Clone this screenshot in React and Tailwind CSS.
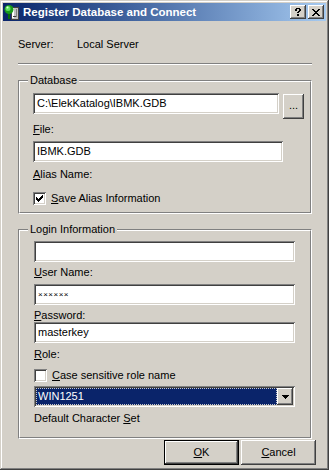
import React from 'react';

const raised = 'shadow-[inset_-1px_-1px_#404040,inset_1px_1px_#ffffff,inset_-2px_-2px_#808080,inset_2px_2px_#d4d0c8]';
const sunken = 'shadow-[inset_1px_1px_#808080,inset_-1px_-1px_#ffffff,inset_2px_2px_#404040,inset_-2px_-2px_#d4d0c8]';

// label with one underlined access key
const Label = ({ pre = '', k, post = '', className = '' }) => (
    <div className={`h-[13px] leading-[13px] whitespace-pre ${className}`}>
        {pre}<span className="underline underline-offset-[1px]">{k}</span>{post}
    </div>
);

const Edit = ({ value, className = '', small }) => (
    <div className={`h-[21px] bg-white ${sunken} flex items-center pl-[4px] ${className}`}>
        <span className={small ? 'text-[8px] leading-none tracking-[0.5px]' : 'leading-[13px]'}>{value}</span>
    </div>
);

const Check = ({ checked }) => (
    <div className={`w-[13px] h-[13px] bg-white ${sunken} flex items-center justify-center shrink-0`}>
        {checked && (
            <svg width="7" height="7" viewBox="0 0 7 7" shapeRendering="crispEdges">
                <path d="M0 2h1v3H0zM1 3h1v3H1zM2 4h1v3H2zM3 3h1v3H3zM4 2h1v3H4zM5 1h1v3H5zM6 0h1v3H6z" fill="#000" />
            </svg>
        )}
    </div>
);

const Group = ({ title, className = '', children }) => (
    <div className={`relative border border-t-[#808080] border-l-[#808080] border-b-white border-r-white ${className}`}>
        <div className="border border-t-white border-l-white border-b-[#808080] border-r-[#808080] h-full">
            {children}
        </div>
        <div className="absolute left-[9px] -top-[7px] bg-[#d4d0c8] px-[2px] h-[13px] leading-[13px]">{title}</div>
    </div>
);

const TitleIcon = () => (
    <svg width="16" height="16" viewBox="0 0 16 16" shapeRendering="crispEdges">
        <rect x="7" y="3" width="7" height="12" fill="#c0c0c0" stroke="#404040" strokeWidth="1" />
        <rect x="8" y="4" width="2" height="10" fill="#ffffff" />
        <rect x="12" y="5" width="1" height="8" fill="#808080" />
        <rect x="9" y="12" width="3" height="1" fill="#404040" />
        <circle cx="5" cy="5.5" r="4.5" fill="#1a9a1a" shapeRendering="auto" />
        <circle cx="4" cy="4.5" r="2.5" fill="#5fe05f" shapeRendering="auto" />
        <circle cx="3.5" cy="3.5" r="1" fill="#d8ffd8" shapeRendering="auto" />
        <rect x="4" y="10" width="2" height="5" fill="#0a6a0a" />
    </svg>
);

export default function App() {
    return (
        <div className="w-[329px] h-[470px] bg-[#d4d0c8] p-[3px] flex flex-col text-[11px] text-black shadow-[inset_-1px_-1px_#404040,inset_1px_1px_#d4d0c8,inset_-2px_-2px_#808080,inset_2px_2px_#ffffff] font-['Liberation_Sans',Arial,sans-serif] select-none">
            {/* title bar */}
            <div className="h-[18px] flex items-center bg-linear-to-r from-[#0a246a] to-[#a6caf0] pl-[1px] pr-[2px]">
                <TitleIcon />
                <span className="ml-[3px] text-white font-bold text-[11.5px] leading-[13px]">Register Database and Connect</span>
                <div className="ml-auto flex gap-[2px]">
                    <div className={`w-[16px] h-[14px] bg-[#d4d0c8] ${raised} flex items-center justify-center`}>
                        <svg width="6" height="8" viewBox="0 0 6 8" shapeRendering="crispEdges">
                            <path d="M1 0h4v1H1zM0 1h2v2H0zM4 1h2v2H4zM3 3h2v1H3zM2 4h2v1H2zM2 6h2v2H2z" fill="#000" />
                        </svg>
                    </div>
                    <div className={`w-[16px] h-[14px] bg-[#d4d0c8] ${raised} flex items-center justify-center`}>
                        <svg width="8" height="7" viewBox="0 0 8 7" shapeRendering="crispEdges">
                            <path d="M0 0h2v1H0zM6 0h2v1H6zM1 1h2v1H1zM5 1h2v1H5zM2 2h4v1H2zM3 3h2v1H3zM2 4h4v1H2zM1 5h2v1H1zM5 5h2v1H5zM0 6h2v1H0zM6 6h2v1H6z" fill="#000" />
                        </svg>
                    </div>
                </div>
            </div>

            {/* client area */}
            <div className="flex flex-col pl-[15px] pr-[10px]">
                <div className="mt-[17px] h-[13px] leading-[13px] flex">
                    <span className="w-[59px]">Server:</span>
                    <span>Local Server</span>
                </div>
                <div className="mt-[12px] w-[294px] h-[2px] border-t border-t-[#808080] border-b border-b-white" />

                <Group title="Database" className="mt-[15px] w-[294px] h-[134px]">
                    <div className="flex flex-col pl-[13px]">
                        <div className="mt-[11px] flex items-start gap-[4px]">
                            <Edit value="C:\ElekKatalog\IBMK.GDB" className="w-[246px]" />
                            <div className={`mt-[1px] w-[21px] h-[25px] bg-[#d4d0c8] ${raised} flex items-end justify-center pb-[8px] leading-none`}>...</div>
                        </div>
                        <Label k="F" post="ile:" className="mt-[4px]" />
                        <Edit value="IBMK.GDB" className="mt-[5px] w-[250px]" />
                        <Label k="A" post="lias Name:" className="mt-[6px]" />
                        <div className="mt-[11px] flex items-center gap-[5px]">
                            <Check checked />
                            <Label k="S" post="ave Alias Information" />
                        </div>
                    </div>
                </Group>

                <Group title="Login Information" className="mt-[15px] w-[294px] h-[210px]">
                    <div className="flex flex-col pl-[14px]">
                        <Edit value="" className="mt-[10px] w-[261px]" />
                        <Label k="U" post="ser Name:" className="mt-[4px]" />
                        <Edit value="××××××" small className="mt-[5px] w-[261px]" />
                        <Label k="P" post="assword:" className="mt-[4px]" />
                        <Edit value="masterkey" className="mt-[0px] w-[261px]" />
                        <Label k="R" post="ole:" className="mt-[5px]" />
                        <div className="mt-[8px] flex items-center gap-[5px]">
                            <Check />
                            <Label k="C" post="ase sensitive role name" />
                        </div>
                        <div className={`mt-[4px] w-[261px] h-[21px] bg-white ${sunken} flex p-[2px]`}>
                            <div className="flex-1 bg-[#0a246a] border border-dotted border-[#c8c8c8] text-white flex items-center pl-[1px] leading-[13px]">WIN1251</div>
                            <div className={`w-[16px] h-[17px] bg-[#d4d0c8] ${raised} flex items-center justify-center`}>
                                <svg width="7" height="4" viewBox="0 0 7 4" shapeRendering="crispEdges">
                                    <path d="M0 0h7v1H0zM1 1h5v1H1zM2 2h3v1H2zM3 3h1v1H3z" fill="#000" />
                                </svg>
                            </div>
                        </div>
                        <Label pre="Default Character " k="S" post="et" className="mt-[5px]" />
                    </div>
                </Group>

                <div className="mt-[1px] flex justify-end gap-[2px]">
                    <div className="w-[75px] h-[25px] border border-black">
                        <div className={`w-full h-full bg-[#d4d0c8] ${raised} flex items-center justify-center leading-[13px]`}>
                            <span><span className="underline underline-offset-[1px]">O</span>K</span>
                        </div>
                    </div>
                    <div className={`w-[75px] h-[25px] bg-[#d4d0c8] ${raised} flex items-center justify-center leading-[13px]`}>
                        <span><span className="underline underline-offset-[1px]">C</span>ancel</span>
                    </div>
                </div>
            </div>
        </div>
    );
}
